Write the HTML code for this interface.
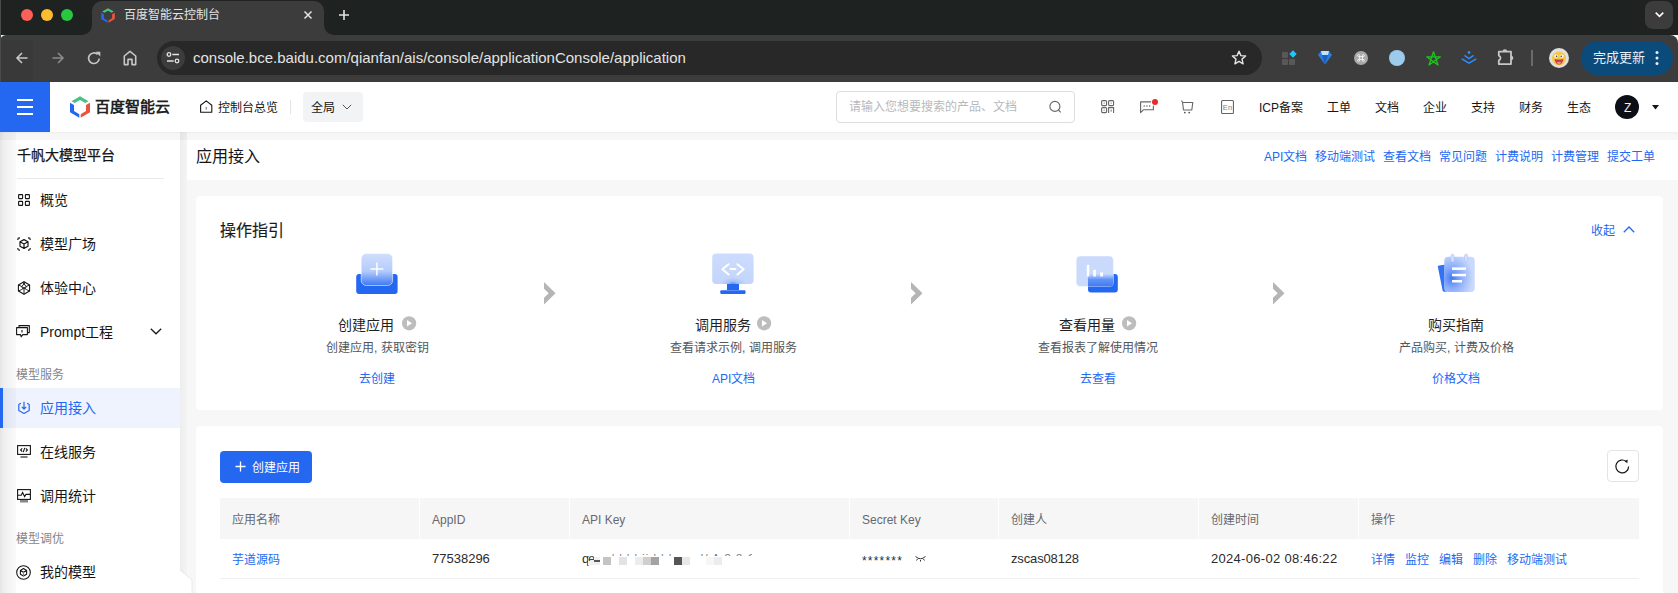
<!DOCTYPE html>
<html lang="zh-CN">
<head>
<meta charset="utf-8">
<style>
*{margin:0;padding:0;box-sizing:border-box}
html,body{width:1678px;height:593px;overflow:hidden;background:#f7f7f8;font-family:"Liberation Sans",sans-serif;color:#151515}
.a{position:absolute;white-space:nowrap;line-height:1}
svg{position:absolute;overflow:visible}
.b{position:absolute}
.navt{font-size:12px;color:#151515;top:102px}
.si{left:40px;font-size:14px;color:#151515}
.grp{left:16px;font-size:12px;color:#84868c}
.lk{color:#2468f2 !important}
.gt{font-size:14px;color:#1f1f1f}
.gd{font-size:12px;color:#53565c}
.gl{font-size:12px;color:#2468f2}
.th{font-size:12px;color:#66696e;top:514px}
.td{font-size:12px;color:#2b2b2b;top:554px}
.tn{font-size:13px;color:#2b2b2b;top:552px}
</style>
</head>
<body>
<!-- ============ BROWSER CHROME ============ -->
<div class="b" style="left:0;top:0;width:1678px;height:35px;background:#1e2221"></div>
<div class="b" style="left:0;top:35px;width:1678px;height:47px;background:#3c3c3c;border-radius:6px 8px 0 0"></div>
<div class="b" style="left:1px;top:40px;width:32px;height:42px;background:#393939"></div>
<div class="b" style="left:0;top:0;width:1px;height:82px;background:#4a4a4a"></div>
<div class="b" style="left:92px;top:1px;width:232px;height:40px;background:#3c3c3c;border-radius:10px 10px 0 0"></div>
<svg style="left:82px;top:25px" width="10" height="10"><path d="M0 10 A10 10 0 0 0 10 0 V10 Z" fill="#3c3c3c"/></svg>
<svg style="left:324px;top:25px" width="10" height="10"><path d="M10 10 A10 10 0 0 1 0 0 V10 Z" fill="#3c3c3c"/></svg>
<div class="b" style="left:21px;top:9px;width:12px;height:12px;border-radius:50%;background:#fe5f57"></div>
<div class="b" style="left:41px;top:9px;width:12px;height:12px;border-radius:50%;background:#febc2e"></div>
<div class="b" style="left:61px;top:9px;width:12px;height:12px;border-radius:50%;background:#28c840"></div>
<!-- favicon -->
<svg style="left:101px;top:8px" width="14" height="15" viewBox="0 0 20 22">
<path d="M1.5 5.2 L10 0.2 L18.5 5.2 L15.3 7.1 L10 4 L4.7 7.1Z" fill="#4ac082"/>
<path d="M0 6.8 L4 9 V15 L9.3 18.2 V21.8 L0 16.2Z" fill="#2468f2"/>
<path d="M20 6.8 L16 9 V15 L10.7 18.2 V21.8 L20 16.2Z" fill="#e9553a"/>
</svg>
<div class="a" style="left:124px;top:9px;font-size:12px;color:#e3e3e3">百度智能云控制台</div>
<svg style="left:304px;top:11px" width="8" height="8"><path d="M0.5 0.5 L7.5 7.5 M7.5 0.5 L0.5 7.5" stroke="#e3e3e3" stroke-width="1.5"/></svg>
<svg style="left:339px;top:10px" width="10" height="10"><path d="M5 0 V10 M0 5 H10" stroke="#e3e3e3" stroke-width="1.6"/></svg>
<div class="b" style="left:1645px;top:1px;width:28px;height:28px;border-radius:8px;background:#3c3c3c"></div>
<svg style="left:1655px;top:12px" width="9" height="5"><path d="M0.7 0.7 L4.5 4.3 L8.3 0.7" stroke="#fff" stroke-width="1.6" fill="none"/></svg>
<!-- nav buttons -->
<svg style="left:16px;top:52px" width="12" height="12"><path d="M11.5 6 H1.2 M6 1 L1 6 L6 11" stroke="#c7c7c7" stroke-width="1.6" fill="none"/></svg>
<svg style="left:52px;top:52px" width="12" height="12"><path d="M0.5 6 H10.8 M6 1 L11 6 L6 11" stroke="#8a8a8a" stroke-width="1.6" fill="none"/></svg>
<svg style="left:87px;top:51px" width="14" height="14"><path d="M12.2 7.6 A5.3 5.3 0 1 1 10.6 3.4" stroke="#c7c7c7" stroke-width="1.6" fill="none"/><path d="M8.6 0.8 H13.3 V5.5 Z" fill="#c7c7c7"/></svg>
<svg style="left:123px;top:50px" width="14" height="16"><path d="M1.3 14.6 V6 L7 1.4 L12.7 6 V14.6 H9 V9.4 H5 V14.6 Z" stroke="#c7c7c7" stroke-width="1.6" fill="none" stroke-linejoin="round"/></svg>
<div class="b" style="left:157px;top:41px;width:1105px;height:34px;border-radius:17px;background:#282828"></div>
<div class="b" style="left:161px;top:46px;width:24px;height:24px;border-radius:50%;background:#3c3c3c"></div>
<svg style="left:166px;top:52px" width="14" height="12"><circle cx="3" cy="2.5" r="1.8" stroke="#e3e3e3" stroke-width="1.3" fill="none"/><path d="M6.3 2.5 H13" stroke="#e3e3e3" stroke-width="1.5"/><circle cx="11" cy="9" r="1.8" stroke="#e3e3e3" stroke-width="1.3" fill="none"/><path d="M1 9 H7.7" stroke="#e3e3e3" stroke-width="1.5"/></svg>
<div class="a" style="left:193px;top:50px;font-size:15px;color:#e3e3e3">console.bce.baidu.com/qianfan/ais/console/applicationConsole/application</div>
<svg style="left:1231px;top:50px" width="16" height="16" viewBox="0 0 16 16"><path d="M8 1.2 L9.9 5.6 L14.6 6 L11 9.1 L12.1 13.8 L8 11.3 L3.9 13.8 L5 9.1 L1.4 6 L6.1 5.6 Z" stroke="#e3e3e3" stroke-width="1.4" fill="none" stroke-linejoin="round"/></svg>
<!-- extensions -->
<div class="b" style="left:1282px;top:52px;width:6px;height:6px;border-radius:1px;background:#585858"></div>
<div class="b" style="left:1282px;top:59px;width:6px;height:6px;border-radius:1px;background:#585858"></div>
<div class="b" style="left:1289px;top:59px;width:6px;height:6px;border-radius:1px;background:#585858"></div>
<svg style="left:1289px;top:50px" width="8" height="8"><path d="M4 0.3 L7.7 4 L4 7.7 L0.3 4Z" fill="#1ec8ff"/></svg>
<svg style="left:1318px;top:50px" width="14" height="15"><path d="M3 1 H11 L14 5 L7 14.5 L0 5 Z" fill="#2a7de1"/><path d="M3 1 H11 L10 5 H4Z" fill="#bfe3ff"/><path d="M4 5 H10 L7 14.5Z" fill="#1b5fc0"/></svg>
<div class="b" style="left:1354px;top:51px;width:14px;height:14px;border-radius:50%;background:#a9a9a9"></div>
<svg style="left:1357px;top:54px" width="8" height="8" viewBox="0 0 8 8"><path d="M2.6 2.6 H5.4 V5.4 H2.6 Z M2.6 2.6 V1.6 A1 1 0 1 0 1.6 2.6 H2.6 M5.4 2.6 V1.6 A1 1 0 1 1 6.4 2.6 H5.4 M5.4 5.4 V6.4 A1 1 0 1 0 6.4 5.4 H5.4 M2.6 5.4 V6.4 A1 1 0 1 1 1.6 5.4 H2.6" stroke="#fff" stroke-width="0.8" fill="none"/></svg>
<div class="b" style="left:1389px;top:50px;width:16px;height:16px;border-radius:50%;background:#9ccbee"></div>
<svg style="left:1426px;top:51px" width="15" height="15" viewBox="0 0 15 15"><path d="M7.5 0.8 L3 14 L14.3 5.8 L0.7 5.8 L12 14 Z" stroke="#1ec31e" stroke-width="1.3" fill="none" stroke-linejoin="round"/></svg>
<svg style="left:1461px;top:51px" width="16" height="13"><circle cx="8" cy="1.5" r="1.4" fill="#2d8cff"/><path d="M3.5 4.3 L8 7.6 L12.5 4.3 M0.8 7.8 L8 12.2 L15.2 7.8" stroke="#2d8cff" stroke-width="1.5" fill="none"/></svg>
<svg style="left:1497px;top:48px" width="17" height="18"><path d="M1.8 3.7 H14 V16.1 H1.8 V12.3 A2.4 2.4 0 0 0 1.8 7.7 Z" stroke="#c7c7c7" stroke-width="1.8" fill="none" stroke-linejoin="round"/><path d="M5.5 3.7 A2.4 2.4 0 0 1 10.3 3.7 Z" fill="#c7c7c7"/><path d="M14 7.7 A2.3 2.3 0 0 1 14 12.3 Z" fill="#c7c7c7"/></svg>
<div class="b" style="left:1531px;top:50px;width:2px;height:16px;background:#6a6a6a"></div>
<div class="b" style="left:1549px;top:48px;width:20px;height:20px;border-radius:50%;background:#e0e0e0"></div>
<svg style="left:1549px;top:48px" width="20" height="20"><circle cx="10" cy="10.5" r="7" fill="#f5c84a"/><ellipse cx="7.2" cy="8" rx="2" ry="1.6" fill="#fff"/><ellipse cx="12.6" cy="8" rx="2" ry="1.6" fill="#fff"/><circle cx="7.6" cy="8.2" r="0.8" fill="#333"/><circle cx="12.2" cy="8.2" r="0.8" fill="#333"/><path d="M5.5 11 Q10 12 14.5 11 Q13.5 16.5 10 16.5 Q6.5 16.5 5.5 11Z" fill="#c63a4a"/><path d="M7.5 14.3 Q10 13 12.5 14.3 Q11.5 16.3 10 16.3 Q8.5 16.3 7.5 14.3Z" fill="#f08a8a"/></svg>
<div class="b" style="left:1581px;top:41px;width:92px;height:34px;border-radius:17px;background:#0b4b7c"></div>
<div class="a" style="left:1593px;top:51px;font-size:13px;color:#e8f0fa">完成更新</div>
<svg style="left:1655px;top:51px" width="4" height="14"><circle cx="2" cy="1.6" r="1.5" fill="#e8f0fa"/><circle cx="2" cy="7" r="1.5" fill="#e8f0fa"/><circle cx="2" cy="12.4" r="1.5" fill="#e8f0fa"/></svg>

<!-- ============ HEADER ============ -->
<div class="b" style="left:0;top:82px;width:1678px;height:50px;background:#fff"></div>
<div class="b" style="left:0;top:82px;width:50px;height:50px;background:#2468f2"></div>
<div class="b" style="left:17px;top:99px;width:16px;height:2px;background:#fff"></div>
<div class="b" style="left:17px;top:106px;width:16px;height:2px;background:#fff"></div>
<div class="b" style="left:17px;top:113px;width:16px;height:2px;background:#fff"></div>
<svg style="left:70px;top:96px" width="20" height="22" viewBox="0 0 20 22">
<path d="M1.5 5.2 L10 0.2 L18.5 5.2 L15.3 7.1 L10 4 L4.7 7.1Z" fill="#4ac082"/>
<path d="M0 6.8 L4 9 V15 L9.3 18.2 V21.8 L0 16.2Z" fill="#2468f2"/>
<path d="M20 6.8 L16 9 V15 L10.7 18.2 V21.8 L20 16.2Z" fill="#e9553a"/>
</svg>
<div class="a" style="left:95px;top:99px;font-size:15px;font-weight:bold;color:#222">百度智能云</div>
<svg style="left:200px;top:100px" width="13" height="13"><path d="M0.6 12.3 V5.2 L6.2 0.9 L11.8 5.2 V12.3 Z" stroke="#151515" stroke-width="1.1" fill="none" stroke-linejoin="round"/><path d="M6.2 7 V9.6" stroke="#666" stroke-width="1"/></svg>
<div class="a navt" style="left:218px">控制台总览</div>
<div class="b" style="left:290px;top:100px;width:1px;height:14px;background:#e3e4e6"></div>
<div class="b" style="left:303px;top:92px;width:60px;height:30px;background:#f2f3f5;border-radius:4px"></div>
<div class="a navt" style="left:311px">全局</div>
<svg style="left:342px;top:104px" width="10" height="6"><path d="M0.8 0.8 L5 5 L9.2 0.8" stroke="#555" stroke-width="1" fill="none"/></svg>
<div class="b" style="left:836px;top:91px;width:239px;height:32px;border:1px solid #dcdde0;border-radius:4px"></div>
<div class="a" style="left:849px;top:101px;font-size:12px;color:#b8b9bd">请输入您想要搜索的产品、文档</div>
<svg style="left:1049px;top:100px" width="13" height="13"><circle cx="5.9" cy="6.4" r="5" stroke="#666" stroke-width="1.1" fill="none"/><path d="M9.5 10 L11.7 12.3" stroke="#666" stroke-width="1.1"/></svg>
<!-- qr -->
<svg style="left:1101px;top:100px" width="14" height="14"><g stroke="#666" stroke-width="1.1" fill="none"><rect x="0.6" y="0.6" width="5" height="5" rx="1"/><rect x="7.6" y="0.6" width="5" height="5" rx="1"/><rect x="0.6" y="7.6" width="5" height="5" rx="1"/><path d="M7.6 13 V7.6 H12.6 V13"/></g><g fill="#666"><rect x="2.6" y="2.6" width="1" height="1"/><rect x="9.6" y="2.6" width="1" height="1"/><rect x="2.6" y="9.6" width="1" height="1"/><rect x="9.6" y="9.6" width="1" height="2"/></g></svg>
<!-- msg -->
<svg style="left:1140px;top:101px" width="15" height="12"><path d="M0.6 11.6 V0.9 H13.4 V8.8 H3.4 Z" stroke="#666" stroke-width="1.1" fill="none" stroke-linejoin="round"/><rect x="3.6" y="4.4" width="1.2" height="1.2" fill="#555"/><rect x="6.3" y="4.4" width="1.2" height="1.2" fill="#555"/><rect x="9" y="4.4" width="1.2" height="1.2" fill="#555"/></svg>
<div class="b" style="left:1151px;top:98px;width:8px;height:8px;border-radius:50%;background:#fff"></div><div class="b" style="left:1152px;top:99px;width:6px;height:6px;border-radius:50%;background:#e62b2b"></div>
<!-- cart -->
<svg style="left:1181px;top:100px" width="13" height="14"><path d="M0.4 0.6 L1.5 2 L2.5 10 H10.8 L11.8 2.5 H1.8" stroke="#666" stroke-width="1.1" fill="none" stroke-linejoin="round"/><circle cx="3.8" cy="12.6" r="0.9" fill="#555"/><circle cx="8.2" cy="12.6" r="0.9" fill="#555"/></svg>
<!-- En -->
<svg style="left:1221px;top:100px" width="13" height="14"><rect x="0.55" y="0.55" width="11.9" height="12.9" rx="1" stroke="#666" stroke-width="1.1" fill="none"/><text x="6.5" y="9.6" font-size="7.6" text-anchor="middle" fill="#808080" font-family="Liberation Sans, sans-serif">En</text></svg>
<div class="a navt" style="left:1259px">ICP备案</div>
<div class="a navt" style="left:1327px">工单</div>
<div class="a navt" style="left:1375px">文档</div>
<div class="a navt" style="left:1423px">企业</div>
<div class="a navt" style="left:1471px">支持</div>
<div class="a navt" style="left:1519px">财务</div>
<div class="a navt" style="left:1567px">生态</div>
<div class="b" style="left:1615px;top:95px;width:24px;height:24px;border-radius:50%;background:#0c0f15"></div>
<div class="a" style="left:1624px;top:102px;font-size:12px;color:#f2f2f2">Z</div>
<svg style="left:1652px;top:105px" width="7" height="5"><path d="M0 0 H7 L3.5 4.5Z" fill="#151515"/></svg>

<!-- ============ SIDEBAR ============ -->
<div class="b" style="left:0;top:132px;width:180px;height:461px;background:#fff"></div>
<div class="b" style="left:0;top:132px;width:16px;height:461px;background:linear-gradient(90deg,#e3e4e5 0,#eeeeef 3px,#f5f5f6 10px,#fbfbfb 18px,#fff 24px)"></div>
<div class="b" style="left:180px;top:132px;width:7px;height:461px;background:linear-gradient(90deg,#ededee,#f4f4f5)"></div>
<div class="a" style="left:17px;top:148px;font-size:14px;color:#151515;-webkit-text-stroke:0.25px #151515">千帆大模型平台</div>
<div class="b" style="left:17px;top:178px;width:147px;height:1px;background:#e8e9eb"></div>
<!-- overview icon -->
<svg style="left:18px;top:194px" width="12" height="12"><g stroke="#151515" stroke-width="1.1" fill="none"><rect x="0.6" y="0.6" width="4" height="4" rx="0.5"/><rect x="7.4" y="0.6" width="4" height="4" rx="0.5"/><rect x="0.6" y="7.4" width="4" height="4" rx="0.5"/><rect x="7.4" y="7.4" width="4" height="4" rx="0.5"/></g></svg>
<div class="a si" style="top:193px">概览</div>
<!-- model square icon -->
<svg style="left:17px;top:237px" width="14" height="14"><g stroke="#151515" stroke-width="1.1" fill="none" stroke-linejoin="round"><path d="M7 2.6 L11 4.8 V9.2 L7 11.4 L3 9.2 V4.8 Z M3 4.8 L7 7 L11 4.8 M7 7 V11.4" stroke-width="1.2"/><path d="M0.7 3 A2.5 2.5 0 0 1 3 0.7 M11 0.7 A2.5 2.5 0 0 1 13.3 3 M13.3 11 A2.5 2.5 0 0 1 11 13.3 M3 13.3 A2.5 2.5 0 0 1 0.7 11" stroke="#444" stroke-width="1.4"/></g></svg>
<div class="a si" style="top:237px">模型广场</div>
<!-- experience hexagon -->
<svg style="left:17px;top:281px" width="14" height="14"><g stroke="#151515" stroke-width="1.1" fill="none" stroke-linejoin="round"><path d="M7 0.7 L12.6 3.9 V10.1 L7 13.3 L1.4 10.1 V3.9 Z"/><path d="M7 0.7 Q7 5 4.3 5.6 Q6 7 5.5 7.7 M7 0.7 Q7 5 9.7 5.6 Q8 7 8.5 7.7 M1.4 3.9 Q5 5.5 7 7 Q9 5.5 12.6 3.9 M1.4 10.1 Q5 8.5 7 7 Q9 8.5 12.6 10.1 M7 13.3 V7" stroke-width="1" stroke="#222"/></g></svg>
<div class="a si" style="top:281px">体验中心</div>
<!-- prompt icon -->
<svg style="left:16px;top:325px" width="14" height="13"><g stroke="#151515" stroke-width="1.1" fill="none" stroke-linejoin="round"><path d="M3 2.6 V0.6 H13.3 V7.6 H11.4"/><path d="M0.6 2.6 H11.4 V9.6 H6.8 L5.2 11.8 L4.6 9.6 H0.6 Z"/><path d="M6 5 V7.4" /></g></svg>
<div class="a si" style="top:325px">Prompt工程</div>
<svg style="left:150px;top:328px" width="12" height="7"><path d="M0.8 0.8 L6 5.8 L11.2 0.8" stroke="#151515" stroke-width="1.2" fill="none"/></svg>
<div class="a grp" style="top:369px">模型服务</div>
<div class="b" style="left:0;top:388px;width:180px;height:40px;background:rgba(36,104,242,0.08)"></div>
<div class="b" style="left:0;top:388px;width:3px;height:40px;background:#2468f2"></div>
<svg style="left:17px;top:401px" width="14" height="14"><g stroke="#2468f2" stroke-width="1.2" fill="none" stroke-linejoin="round"><path d="M3.9 2.3 L1.8 3.5 V9.5 L7 12.5 L12.2 9.5 V3.5 L10.1 2.3"/><path d="M7 0.8 V8 M4.8 5.8 L7 8 L9.2 5.8"/></g></svg>
<div class="a si" style="top:401px;color:#2468f2">应用接入</div>
<!-- online service -->
<svg style="left:17px;top:445px" width="14" height="13"><g stroke="#151515" stroke-width="1.1" fill="none"><rect x="0.6" y="0.6" width="12.8" height="8.8"/><path d="M3.5 12 H10.5"/><path d="M5.2 3.4 L3.6 5 L5.2 6.6 M8.8 3.4 L10.4 5 L8.8 6.6 M7.7 2.8 L6.3 7.2"/></g></svg>
<div class="a si" style="top:445px">在线服务</div>
<!-- stats -->
<svg style="left:17px;top:489px" width="14" height="14"><g stroke="#151515" stroke-width="1.1" fill="none"><rect x="0.6" y="0.6" width="12.8" height="9.8"/><path d="M0.6 6.2 H4.2 L5.6 3.4 L7.6 7.6 L9 5.4 H13.4"/></g><rect x="3" y="11" width="8" height="2.5" fill="#888"/></svg>
<div class="a si" style="top:489px">调用统计</div>
<div class="a grp" style="top:533px">模型调优</div>
<svg style="left:16px;top:565px" width="15" height="15"><g stroke="#151515" stroke-width="1.1" fill="none" stroke-linejoin="round"><circle cx="7.5" cy="7.5" r="6.8"/><path d="M7.5 3.6 L10.6 5.4 V9.2 L7.5 11 L4.4 9.2 V5.4 Z M4.4 5.4 L7.5 7.2 L10.6 5.4"/><path d="M7.5 7.2 V11" stroke="#888"/></g></svg>
<div class="a si" style="top:565px">我的模型</div>
<!-- collapse handle -->
<svg style="left:180px;top:570px" width="14" height="24"><path d="M0 0 L12 10 V24 H0 Z" fill="#fff"/><path d="M0 0 L12 10 V24" stroke="#e9eaeb" stroke-width="1" fill="none"/></svg>

<!-- ============ CONTENT ============ -->
<div class="b" style="left:187px;top:132px;width:1491px;height:48px;background:#fff"></div>
<div class="b" style="left:0;top:132px;width:1678px;height:8px;background:linear-gradient(180deg,rgba(0,0,0,0.07) 0,rgba(0,0,0,0.04) 2px,rgba(0,0,0,0.03) 8px)"></div>
<div class="a" style="left:196px;top:149px;font-size:16px;color:#151515">应用接入</div>
<div class="a lk" style="left:1264px;top:151px;font-size:12px">API文档</div>
<div class="a lk" style="left:1315px;top:151px;font-size:12px">移动端测试</div>
<div class="a lk" style="left:1383px;top:151px;font-size:12px">查看文档</div>
<div class="a lk" style="left:1439px;top:151px;font-size:12px">常见问题</div>
<div class="a lk" style="left:1495px;top:151px;font-size:12px">计费说明</div>
<div class="a lk" style="left:1551px;top:151px;font-size:12px">计费管理</div>
<div class="a lk" style="left:1607px;top:151px;font-size:12px">提交工单</div>

<div class="b" style="left:196px;top:196px;width:1467px;height:214px;background:#fff;border-radius:4px"></div>
<div class="a" style="left:220px;top:223px;font-size:16px;color:#1a1a1a;-webkit-text-stroke:0.15px #1a1a1a">操作指引</div>
<div class="a lk" style="left:1591px;top:225px;font-size:12px">收起</div>
<svg style="left:1623px;top:226px" width="12" height="7"><path d="M0.8 6.2 L6 1 L11.2 6.2" stroke="#2468f2" stroke-width="1.3" fill="none"/></svg>

<!-- guide icons -->
<svg style="left:356px;top:253px" width="42" height="42">
<defs><linearGradient id="g1" x1="0" y1="0" x2="0" y2="1"><stop offset="0" stop-color="#cfdefd"/><stop offset="0.55" stop-color="#b4cbfb"/><stop offset="1" stop-color="#3c78f4"/></linearGradient></defs>
<rect x="0.2" y="21" width="41.4" height="20" rx="3" fill="#2468f2"/>
<rect x="5.2" y="0.6" width="31.4" height="31.9" rx="5" fill="url(#g1)" stroke="#fff" stroke-opacity="0.7" stroke-width="0.8"/>
<path d="M20.9 9.5 V22.5 M14.4 16 H27.4" stroke="#fff" stroke-opacity="0.95" stroke-width="1.5"/>
</svg>
<svg style="left:712px;top:253px" width="42" height="42">
<defs><linearGradient id="g2" x1="0" y1="0" x2="0" y2="1"><stop offset="0" stop-color="#cddcfd"/><stop offset="1" stop-color="#c3d5fc"/></linearGradient></defs>
<rect x="15" y="30" width="12" height="7" fill="#2468f2"/>
<rect x="8.3" y="37.3" width="25.2" height="3.7" rx="1" fill="#2468f2"/>
<rect x="0.2" y="0.6" width="41.4" height="30.4" rx="4" fill="url(#g2)"/>
<defs><radialGradient id="rg2" cx="0.5" cy="1" r="0.5" fx="0.5" fy="1"><stop offset="0" stop-color="#3a77f4" stop-opacity="0.75"/><stop offset="0.45" stop-color="#3a77f4" stop-opacity="0.2"/><stop offset="1" stop-color="#3a77f4" stop-opacity="0"/></radialGradient></defs><rect x="8" y="18" width="26" height="13" fill="url(#rg2)"/><path d="M16.6 11.2 L10.4 16.3 L16.6 21.4 M25.4 11.2 L31.6 16.3 L25.4 21.4 M18.6 16 H23.4" stroke="#fff" stroke-width="2" fill="none" stroke-linejoin="round" stroke-linecap="round"/>
</svg>
<svg style="left:1076px;top:255px" width="42" height="40">
<defs><linearGradient id="g3" x1="0" y1="0" x2="0" y2="1"><stop offset="0" stop-color="#cddcfd"/><stop offset="0.5" stop-color="#bcd1fc"/><stop offset="1" stop-color="#4a82f5"/></linearGradient></defs>
<rect x="12" y="18.9" width="29.8" height="18.7" rx="3" fill="#2468f2"/>
<defs><linearGradient id="g3b" x1="0" y1="0" x2="0" y2="1"><stop offset="0" stop-color="#4f86f6" stop-opacity="0"/><stop offset="0.45" stop-color="#4f86f6" stop-opacity="0.85"/><stop offset="1" stop-color="#3f7af5"/></linearGradient></defs><rect x="0.2" y="1" width="37.2" height="30.5" rx="4" fill="#cadafd" stroke="#fff" stroke-opacity="0.6" stroke-width="0.8"/><path d="M12 18.9 H37.4 V27.5 A4 4 0 0 1 33.4 31.5 H12 Z" fill="url(#g3b)"/>
<rect x="10.8" y="9.8" width="2.5" height="11.6" fill="#fff"/>
<rect x="17.2" y="14.8" width="2.7" height="6.6" fill="#fff"/>
<rect x="24.2" y="17.4" width="2.8" height="4" fill="#fff"/>
</svg>
<svg style="left:1436px;top:253px" width="42" height="42">
<defs><radialGradient id="g4r" cx="0.25" cy="0.6" r="0.7"><stop offset="0" stop-color="#3f78f5"/><stop offset="0.45" stop-color="#7ea3f8" stop-opacity="0.8"/><stop offset="1" stop-color="#7ea3f8" stop-opacity="0"/></radialGradient></defs>
<path d="M2 14.5 Q1 13 3 12.6 L10 11.5 L10.5 38.8 L8.5 38.8 Q7 38.8 6.6 37.5 Z" fill="#3472f4"/>
<rect x="8.3" y="3.7" width="30.4" height="35.3" rx="4" fill="#c8d9fd"/>
<rect x="8.3" y="3.7" width="30.4" height="35.3" rx="4" fill="url(#g4r)"/>
<rect x="14.9" y="1.2" width="3.2" height="7.6" rx="1.6" fill="#d3e0fd" stroke="#a9c2fa" stroke-width="0.6"/>
<rect x="28.5" y="1.2" width="3.2" height="7.6" rx="1.6" fill="#d3e0fd" stroke="#a9c2fa" stroke-width="0.6"/>
<rect x="16" y="14.4" width="14" height="2.5" fill="#fff"/>
<rect x="16" y="20.8" width="14" height="2.5" fill="#fff"/>
<rect x="16" y="27" width="10" height="2.5" fill="#fff"/>
</svg>
<!-- arrows -->
<svg style="left:544px;top:282px" width="12" height="23"><path d="M0 0 L11.5 11.3 L0 22.5 V15.8 L4.7 11.3 L0 6.8 Z" fill="#b5b5b5"/></svg>
<svg style="left:911px;top:282px" width="12" height="23"><path d="M0 0 L11.5 11.3 L0 22.5 V15.8 L4.7 11.3 L0 6.8 Z" fill="#b5b5b5"/></svg>
<svg style="left:1273px;top:282px" width="12" height="23"><path d="M0 0 L11.5 11.3 L0 22.5 V15.8 L4.7 11.3 L0 6.8 Z" fill="#b5b5b5"/></svg>
<!-- guide text -->
<div class="a gt" style="top:318px;left:338px">创建应用</div>
<svg style="left:402px;top:316px" width="15" height="15"><circle cx="7.1" cy="7.3" r="7.1" fill="#bdbdbd"/><path d="M5 4 L10 7.3 L5 10.6 Z" fill="#fff"/></svg>
<div class="a gd" style="top:342px;left:326px">创建应用, 获取密钥</div>
<div class="a gl" style="top:373px;left:359px">去创建</div>

<div class="a gt" style="top:318px;left:695px">调用服务</div>
<svg style="left:757px;top:316px" width="15" height="15"><circle cx="7.1" cy="7.3" r="7.1" fill="#bdbdbd"/><path d="M5 4 L10 7.3 L5 10.6 Z" fill="#fff"/></svg>
<div class="a gd" style="top:342px;left:670px">查看请求示例, 调用服务</div>
<div class="a gl" style="top:373px;left:712px">API文档</div>

<div class="a gt" style="top:318px;left:1059px">查看用量</div>
<svg style="left:1122px;top:316px" width="15" height="15"><circle cx="7.1" cy="7.3" r="7.1" fill="#bdbdbd"/><path d="M5 4 L10 7.3 L5 10.6 Z" fill="#fff"/></svg>
<div class="a gd" style="top:342px;left:1038px">查看报表了解使用情况</div>
<div class="a gl" style="top:373px;left:1080px">去查看</div>

<div class="a gt" style="top:318px;left:1428px">购买指南</div>
<div class="a gd" style="top:342px;left:1399px">产品购买, 计费及价格</div>
<div class="a gl" style="top:373px;left:1432px">价格文档</div>

<!-- table card -->
<div class="b" style="left:196px;top:426px;width:1467px;height:180px;background:#fff;border-radius:4px"></div>
<div class="b" style="left:220px;top:451px;width:92px;height:32px;background:#2468f2;border-radius:4px"></div>
<svg style="left:235px;top:461px" width="11" height="11"><path d="M5.5 0.5 V10.5 M0.5 5.5 H10.5" stroke="#fff" stroke-width="1.3"/></svg>
<div class="a" style="left:252px;top:462px;font-size:12px;color:#fff">创建应用</div>
<div class="b" style="left:1607px;top:450px;width:32px;height:32px;border:1px solid #e3e4e6;border-radius:4px;background:#fff"></div>
<svg style="left:1615px;top:458px" width="16" height="16"><path d="M13.6 8.4 A6.4 6.4 0 1 1 11.4 3.6" stroke="#151515" stroke-width="1.2" fill="none"/><path d="M9.6 3.2 L12.6 1.6 L12.4 5.2 Z" fill="#151515"/></svg>

<div class="b" style="left:220px;top:498px;width:1419px;height:41px;background:#f6f6f7"></div>
<div class="b" style="left:419px;top:498px;width:1px;height:41px;background:#fff"></div>
<div class="b" style="left:569px;top:498px;width:1px;height:41px;background:#fff"></div>
<div class="b" style="left:849px;top:498px;width:1px;height:41px;background:#fff"></div>
<div class="b" style="left:998px;top:498px;width:1px;height:41px;background:#fff"></div>
<div class="b" style="left:1198px;top:498px;width:1px;height:41px;background:#fff"></div>
<div class="b" style="left:1358px;top:498px;width:1px;height:41px;background:#fff"></div>
<div class="a th" style="left:232px">应用名称</div>
<div class="a th" style="left:432px">AppID</div>
<div class="a th" style="left:582px">API Key</div>
<div class="a th" style="left:862px">Secret Key</div>
<div class="a th" style="left:1011px">创建人</div>
<div class="a th" style="left:1211px">创建时间</div>
<div class="a th" style="left:1371px">操作</div>
<div class="b" style="left:220px;top:578px;width:1419px;height:1px;background:#eff0f1"></div>

<div class="a td lk" style="left:232px">芋道源码</div>
<div class="a tn" style="left:432px">77538296</div>
<div class="a tn" style="left:582px">q</div>
<div class="b" style="left:588px;top:557px;width:12px;height:8px;background:#f0f0f0"></div>
<div class="b" style="left:603px;top:557px;width:8px;height:8px;background:#c4c4c4"></div>
<div class="b" style="left:619px;top:557px;width:8px;height:8px;background:#e3e3e3"></div>
<div class="b" style="left:635px;top:557px;width:8px;height:8px;background:#ececec"></div>
<div class="b" style="left:643px;top:557px;width:8px;height:8px;background:#cfcfcf"></div>
<div class="b" style="left:651px;top:557px;width:8px;height:8px;background:#a3a3a3"></div>
<div class="b" style="left:674px;top:557px;width:8px;height:8px;background:#555"></div>
<div class="b" style="left:682px;top:557px;width:8px;height:8px;background:#e8e8e8"></div>
<div class="b" style="left:706px;top:557px;width:8px;height:8px;background:#f6f6f6"></div>
<div class="b" style="left:714px;top:557px;width:8px;height:8px;background:#ececec"></div>
<div class="b" style="left:588px;top:556px;width:6px;height:5px;overflow:hidden"><div class="a" style="left:0;top:-4px;font-size:13px;color:#444">e</div></div>
<div class="b" style="left:594px;top:560px;width:6px;height:2px;background:#555"></div>
<div class="b" style="left:612px;top:553px;width:140px;height:3px;overflow:hidden"><div class="a" style="left:0;top:0;font-size:11px;color:#777;letter-spacing:1.2px">' ' ' ' ij '  '  ' . _ .l/ A 8 8 C I / O V/</div></div>
<div class="a tn" style="left:862px;top:555px;font-size:12px;letter-spacing:1.2px">*******</div>
<svg style="left:915px;top:556px" width="11" height="6"><path d="M0.5 0.5 Q5.5 5 10.5 0.5 M2.5 3 L1.5 4.5 M5.5 4 V5.5 M8.5 3 L9.5 4.5" stroke="#333" stroke-width="1" fill="none"/></svg>
<div class="a tn" style="left:1011px;letter-spacing:-0.15px">zscas08128</div>
<div class="a tn" style="left:1211px;letter-spacing:0.3px">2024-06-02 08:46:22</div>
<div class="a td lk" style="left:1371px">详情</div>
<div class="a td lk" style="left:1405px">监控</div>
<div class="a td lk" style="left:1439px">编辑</div>
<div class="a td lk" style="left:1473px">删除</div>
<div class="a td lk" style="left:1507px">移动端测试</div>
</body>
</html>
